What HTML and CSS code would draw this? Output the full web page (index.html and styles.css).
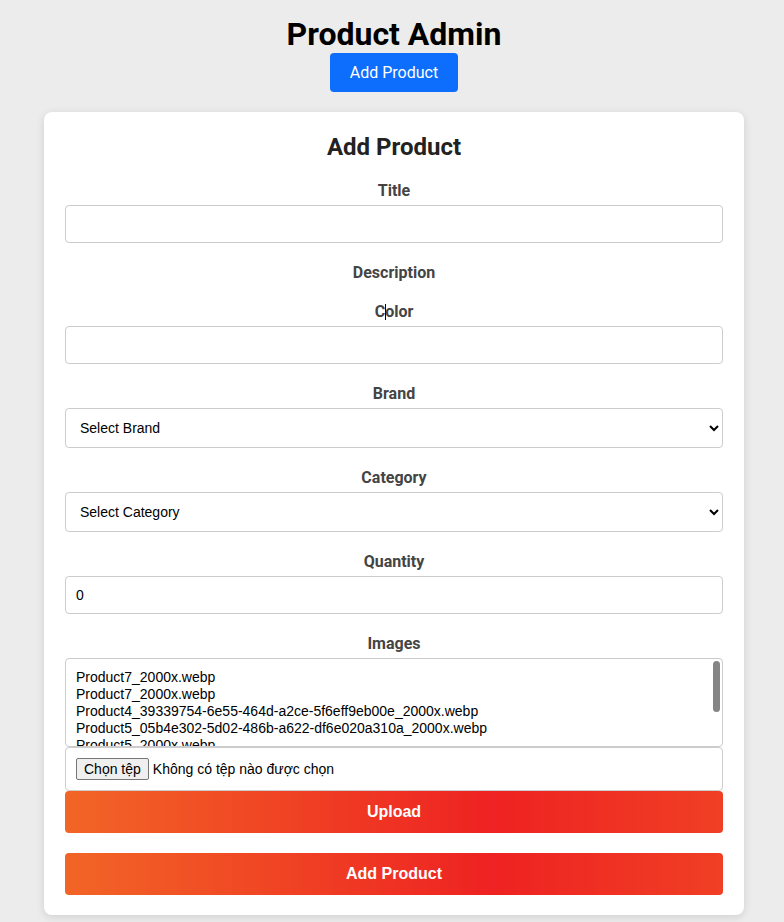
FILE: index.html
```html
<!DOCTYPE html>
<html lang="vi">
<head>
<meta charset="utf-8">
<title>Product Admin</title>
<link rel="stylesheet" href="styles.css">
</head>
<body>
<div class="page">
  <h1 class="page-title">Product Admin</h1>
  <button class="btn-primary" type="button">Add Product</button>
  <div class="card">
    <h2 class="card-title">Add Product</h2>
    <div class="group">
      <label class="label">Title</label>
      <input class="field" type="text">
    </div>
    <div class="group">
      <label class="label label-flush">Description</label>
    </div>
    <div class="group">
      <label class="label">C<span class="caret"></span>olor</label>
      <input class="field" type="text">
    </div>
    <div class="group">
      <label class="label">Brand</label>
      <select class="field select"><option>Select Brand</option></select>
    </div>
    <div class="group">
      <label class="label">Category</label>
      <select class="field select"><option>Select Category</option></select>
    </div>
    <div class="group">
      <label class="label">Quantity</label>
      <input class="field" type="text" value="0">
    </div>
    <div class="group">
      <label class="label">Images</label>
      <div class="file-list-wrap">
        <div class="file-list">
          <div>Product7_2000x.webp</div>
          <div>Product7_2000x.webp</div>
          <div>Product4_39339754-6e55-464d-a2ce-5f6eff9eb00e_2000x.webp</div>
          <div>Product5_05b4e302-5d02-486b-a622-df6e020a310a_2000x.webp</div>
          <div>Product5_2000x.webp</div>
          <div>Product6_2000x.webp</div>
          <div>Product8_2000x.webp</div>
        </div>
        <div class="scroll-thumb"></div>
      </div>
      <div class="file-input">
        <span class="file-btn">Chọn tệp</span>
        <span class="file-text">Không có tệp nào được chọn</span>
      </div>
      <button class="btn-grad" type="button">Upload</button>
    </div>
    <button class="btn-grad" type="button">Add Product</button>
  </div>
</div>
</body>
</html>
```

FILE: styles.css
```css
html, body {
  margin: 0;
  padding: 0;
  background: #ececec;
}
body {
  font-family: Roboto, "Liberation Sans", Arial, sans-serif;
}
.page {
  display: flex;
  flex-direction: column;
  align-items: center;
  padding-top: 15px;
  padding-left: 4px;
  padding-bottom: 7px;
}
.page-title {
  margin: 0;
  font-size: 32px;
  line-height: 38px;
  font-weight: 700;
  color: #000;
}
.btn-primary {
  margin: 0 0 20px;
  height: 39px;
  padding: 0 20px;
  background: #0d6efd;
  color: #fff;
  border: none;
  border-radius: 4px;
  font-family: Roboto, sans-serif;
  font-size: 16px;
}
.card {
  width: 700px;
  box-sizing: border-box;
  padding: 21px 21px 20px 21px;
  background: #fff;
  border-radius: 8px;
  box-shadow: 0 2px 8px rgba(0,0,0,0.12);
  display: flex;
  flex-direction: column;
}
.card-title {
  margin: 0 0 20px;
  text-align: center;
  font-size: 24px;
  line-height: 28px;
  font-weight: 700;
  color: #222;
}
.group {
  display: flex;
  flex-direction: column;
  margin-bottom: 20px;
}
.label {
  display: block;
  text-align: center;
  font-weight: 700;
  font-size: 16px;
  line-height: 19px;
  color: #444;
  margin-bottom: 5px;
}
.label-flush {
  margin-bottom: 0;
}
.caret {
  display: inline-block;
  width: 1px;
  height: 16px;
  margin-right: -1px;
  background: #000;
  vertical-align: -3px;
}
.field {
  box-sizing: border-box;
  width: 100%;
  height: 38px;
  padding: 0 10px;
  border: 1px solid #ccc;
  border-radius: 4px;
  background: #fff;
  font-family: "Liberation Sans", Arial, sans-serif;
  font-size: 14px;
  color: #000;
}
.select {
  height: 40px;
  padding: 0 10px;
  font-size: 14px;
}
.file-list-wrap {
  position: relative;
}
.file-list {
  box-sizing: border-box;
  height: 89px;
  padding: 10px 10px 0;
  border: 1px solid #ccc;
  border-radius: 4px;
  overflow: hidden;
  font-family: "Liberation Sans", Arial, sans-serif;
  font-size: 14px;
  line-height: 17px;
  color: #000;
}
.scroll-thumb {
  position: absolute;
  top: 3px;
  right: 3px;
  width: 7px;
  height: 51px;
  border-radius: 4px;
  background: #858585;
}
.file-input {
  box-sizing: border-box;
  height: 44px;
  padding: 0 10px;
  border: 1px solid #ccc;
  border-radius: 4px;
  display: flex;
  align-items: center;
  gap: 4px;
  font-family: "Liberation Sans", Arial, sans-serif;
  font-size: 14px;
  color: #000;
}
.file-btn {
  box-sizing: border-box;
  height: 22px;
  padding: 0 7px;
  display: flex;
  align-items: center;
  background: #efefef;
  border: 1px solid #767676;
  border-radius: 2px;
}
.btn-grad {
  height: 42px;
  width: 100%;
  border: none;
  border-radius: 4px;
  color: #fff;
  font-family: "Liberation Sans", Arial, sans-serif;
  font-weight: 700;
  font-size: 16px;
  background: linear-gradient(90deg, #f26526 0%, #ee2222 65%, #f03f24 100%);
}
```
